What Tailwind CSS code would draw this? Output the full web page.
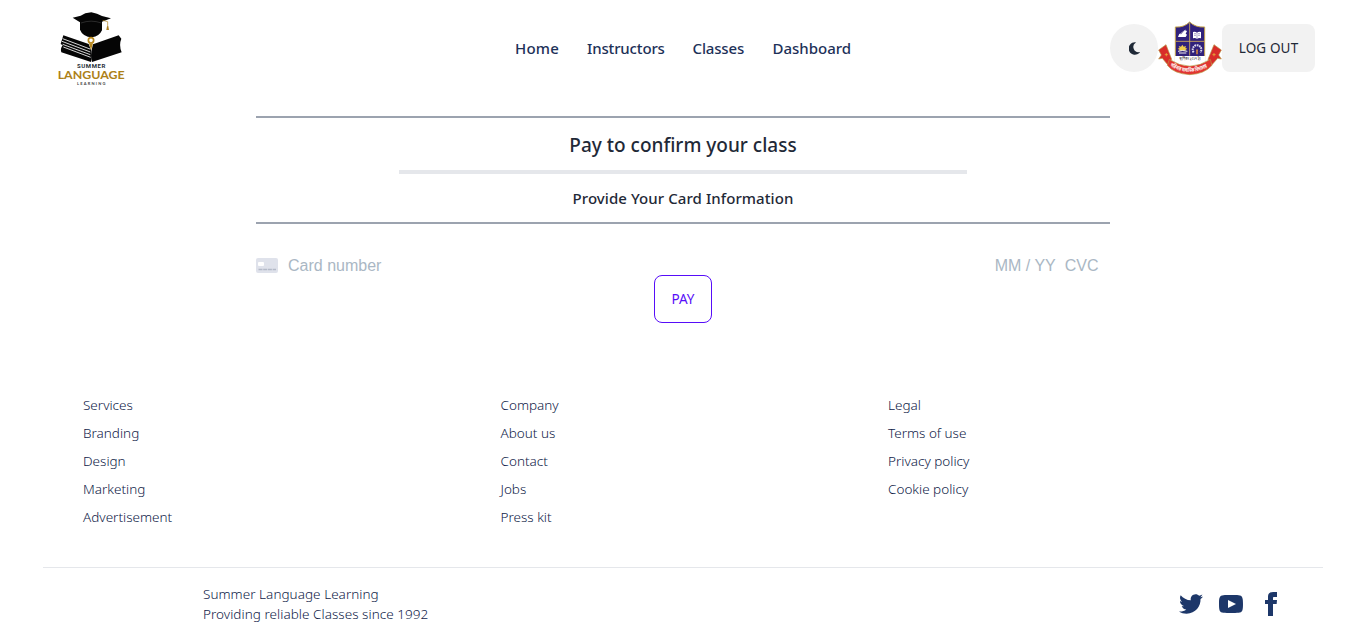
<!DOCTYPE html>
<html lang="en">
<head>
<meta charset="utf-8">
<title>Summer Language Learning</title>
<script src="https://cdn.jsdelivr.net/npm/@tailwindcss/browser@4"></script>
</head>
<body class="h-[640px] overflow-hidden bg-white font-['Noto_Sans',sans-serif] text-[#1f2937]">
<header class="flex h-24 pl-[50px] pr-[51px]">
  <svg class="mt-[5px] h-[90px] w-[84px] shrink-0" viewBox="0 0 252 270">
    <path fill="#050505" d="M68 38 92 32 106 25 124 22 141 26 156 33 183 40 156 50V76Q148 94 126 97Q98 95 90 74V52Z"/>
    <path d="M93 54Q123 43 154 54" stroke="#777" stroke-width="1" fill="none"/>
    <path d="M158 46 173 50V66" stroke="#ad8020" stroke-width="2" fill="none"/><path d="M171 64h4l2 11h-8Z" fill="#ad8020"/>
    <path fill="#050505" d="M40 91 116 117 124 138 123 171 34 142Q30 132 38 121L32 117Z"/>
    <path fill="#050505" d="M129 118 206 91 214 101Q206 120 215 142L126 171Q119 154 129 118Z"/>
    <path d="M38 101 120 132M36 109 121 141M38 118 121 149M40 126 122 157" stroke="#fff" stroke-width="2.5"/>
    <circle cx="123" cy="106" r="8" fill="#fff" stroke="#b8891f" stroke-width="5"/>
    <path d="m117 115 6 21 6-21Z" fill="#b8891f"/>
    <text x="81" y="188" textLength="85" font-family="Roboto" font-weight="700" font-size="18" fill="#263038">SUMMER</text>
    <text x="23" y="222" textLength="201" lengthAdjust="spacingAndGlyphs" font-family="Lato" font-weight="700" font-size="34" fill="#ad8118">LANGUAGE</text>
    <text x="81" y="241" textLength="85" font-family="Lato" font-weight="700" font-size="12" fill="#444">LEARNING</text>
  </svg>
  <nav class="ml-[381px] flex items-center gap-7 text-[15px] font-medium text-[#1d3158]">
    <a class="w-11 tracking-[0.015em] whitespace-nowrap">Home</a><a class="w-[77.5px] tracking-[-0.01em] whitespace-nowrap">Instructors</a><a class="w-[52px] tracking-[-0.01em] whitespace-nowrap">Classes</a><a class="w-[79px] whitespace-nowrap">Dashboard</a>
  </nav>
  <div class="ml-auto flex items-center">
    <button class="flex size-12 items-center justify-center rounded-full bg-[#f2f2f2]">
      <svg class="h-[13px] w-[11px]" viewBox="0 0 11 13" fill="#1f2937"><path d="M6.3 0.2A6.3 6.3 0 1 0 10.8 10.5A0.3 0.3 0 0 0 10.5 10A5.1 5.1 0 0 1 6.6 0.8A0.3 0.3 0 0 0 6.3 0.2Z"/></svg>
    </button>
    <svg class="h-16 w-16" viewBox="174 18 192 192">
      <path d="M226 156V51Q252 53 269 36Q286 53 314 51V156Z" fill="#30217b" stroke="#c4a34b" stroke-width="3"/>
      <path d="M269 38V137M227 94H313" stroke="#d6b35c" stroke-width="2.5"/>
      <path d="M224 138H316V166H224Z" fill="#fff"/>
      <path d="m234 81 4-10 5 2 12-12 6 2-4 8 4 3-4 7Z" fill="#fff"/><path d="m238 74 18-14" stroke="#eee" stroke-width="2"/>
      <path d="M279 66q7-2 12 2q5-4 12-2v19q-6-2-12 1q-6-3-12-1Z" fill="#fff"/><path d="M291 69v15M282 71h6M282 76h6M294 71h6M294 76h6" stroke="#30217b" stroke-width="1.2"/>
      <path d="m233 116 6-2-3-6 7 2 4-6 4 6 7-2-2 6 6 2-5 3v3h-19v-3Z" fill="#f0cd4c"/><path d="M234 124q14-5 28 0M237 129h22" stroke="#eee" stroke-width="3" fill="none"/>
      <path d="M281 127A13 13 0 1 1 301 127" fill="none" stroke="#ddd9ee" stroke-width="6" stroke-dasharray="5 2"/><path d="M289 133v-12q2-9 4 0v12Z" fill="#ed9636"/>
      <text x="238" y="151" textLength="64" lengthAdjust="spacingAndGlyphs" font-family="Noto Sans Bengali,sans-serif" font-size="13" fill="#222">স্থাপিতঃ ২০১৭ ইং</text>
      <path d="m176 120 22-16 17 44-12 16-16-19-11 2 8-12Z" fill="#d82c2a" stroke="#b79844" stroke-width="2"/>
      <path d="m364 120-22-16-18 44 12 16 17-19 11 2-8-12Z" fill="#d82c2a" stroke="#b79844" stroke-width="2"/>
      <path d="M208 148Q269 189 331 148L336 166Q314 192 269 194Q221 191 202 166Z" fill="#e13531" stroke="#b79844" stroke-width="2"/>
      <path d="m199 129 1 4 4 1-4 1-1 4-1-4-4-1 4-1ZM342 129l1 4 4 1-4 1-1 4-1-4-4-1 4-1Z" fill="#e6ad3a" stroke="#e6ad3a"/>
      <path id="ribbon" d="M210 168Q269 204 331 167" fill="none"/>
      <text font-family="Noto Sans Bengali,sans-serif" font-size="17" font-weight="700" fill="#fff"><textPath href="#ribbon" textLength="118" lengthAdjust="spacingAndGlyphs">পরিবার মাধ্যমিক বিদ্যালয়</textPath></text>
    </svg>
    <button class="h-12 w-[93px] rounded-lg bg-[#f2f2f2] text-[13.5px] tracking-[0.01em]">LOG OUT</button>
  </div>
</header>
<main class="mx-auto mt-5 w-[854px]">
  <section class="flex h-[108px] flex-col items-center border-y-2 border-[#9ca3af] text-center">
    <h1 class="h-[52px] pt-3 text-[19px] leading-[30px] font-medium whitespace-nowrap">Pay to confirm your class</h1>
    <div class="h-1 w-[568px] shrink-0 bg-[#e5e7eb]"></div>
    <h2 class="pt-3 text-[15px] leading-6 font-medium tracking-[0.005em] whitespace-nowrap">Provide Your Card Information</h2>
  </section>
  <form class="mt-[31px] flex h-5 items-center font-['Liberation_Sans',sans-serif] text-[16px] text-[#aab7c4]">
    <svg class="mt-px h-[15px] w-[22px]" viewBox="0 0 22 15"><rect width="22" height="15" rx="2" fill="#dfe2eb"/><rect x="2" y="4" width="6" height="4" rx="1" fill="#fff"/><path d="M2.5 11.5H20" stroke="#b4bac8" stroke-width="1.3" stroke-dasharray="4 .7"/></svg>
    <span class="ml-2.5 pt-0.5">Card number</span><span class="ml-auto pt-0.5">MM / YY</span><span class="mr-[11.5px] ml-[9px] pt-0.5">CVC</span>
  </form>
  <button class="mx-auto block h-12 w-[58px] rounded-lg border border-[#570df8] text-[13.5px] text-[#570df8]">PAY</button>
</main>
<footer class="mt-[72px] text-[13.5px] font-light text-[#0f2248]">
  <div class="grid h-[172px] grid-cols-[417.5px_387.5px_1fr] pl-[83px]">
    <nav class="flex flex-col gap-2 leading-5"><a>Services</a><a>Branding</a><a>Design</a><a>Marketing</a><a>Advertisement</a></nav>
    <nav class="flex flex-col gap-2 leading-5"><a>Company</a><a>About us</a><a>Contact</a><a>Jobs</a><a>Press kit</a></nav>
    <nav class="flex flex-col gap-2 leading-5"><a>Legal</a><a>Terms of use</a><a>Privacy policy</a><a>Cookie policy</a></nav>
  </div>
  <div class="mx-[43px] flex justify-between border-t border-[#e5e7eb] pt-4 pr-10 pl-40">
    <p class="leading-5 tracking-[0.003em]">Summer Language Learning<br>Providing reliable Classes since 1992</p>
    <div class="mt-2 flex gap-4 fill-[#1d3769]">
      <svg class="size-6" viewBox="0 0 24 24"><path d="M24 4.557c-.883.392-1.832.656-2.828.775 1.017-.609 1.798-1.574 2.165-2.724-.951.564-2.005.974-3.127 1.195-.897-.957-2.178-1.555-3.594-1.555-3.179 0-5.515 2.966-4.797 6.045-4.091-.205-7.719-2.165-10.148-5.144-1.29 2.213-.669 5.108 1.523 6.574-.806-.026-1.566-.247-2.229-.616-.054 2.281 1.581 4.415 3.949 4.89-.693.188-1.452.232-2.224.084.626 1.956 2.444 3.379 4.6 3.419-2.07 1.623-4.678 2.348-7.29 2.04 2.179 1.397 4.768 2.212 7.548 2.212 9.142 0 14.307-7.721 13.995-14.646.962-.695 1.797-1.562 2.457-2.549z"/></svg>
      <svg class="size-6" viewBox="0 0 24 24"><path d="M19.615 3.184c-3.604-.246-11.631-.245-15.23 0-3.897.266-4.356 2.62-4.385 8.816.029 6.185.484 8.549 4.385 8.816 3.6.245 11.626.246 15.23 0 3.897-.266 4.356-2.62 4.385-8.816-.029-6.185-.484-8.549-4.385-8.816zm-10.615 12.816v-8l8 3.993-8 4.007z"/></svg>
      <svg class="size-6" viewBox="0 0 24 24"><path d="M9 8h-3v4h3v12h5v-12h3.642l.358-4h-4v-1.667c0-.955.192-1.333 1.115-1.333h2.885v-5h-3.808c-3.596 0-5.192 1.583-5.192 4.615v3.385z"/></svg>
    </div>
  </div>
</footer>
</body>
</html>
